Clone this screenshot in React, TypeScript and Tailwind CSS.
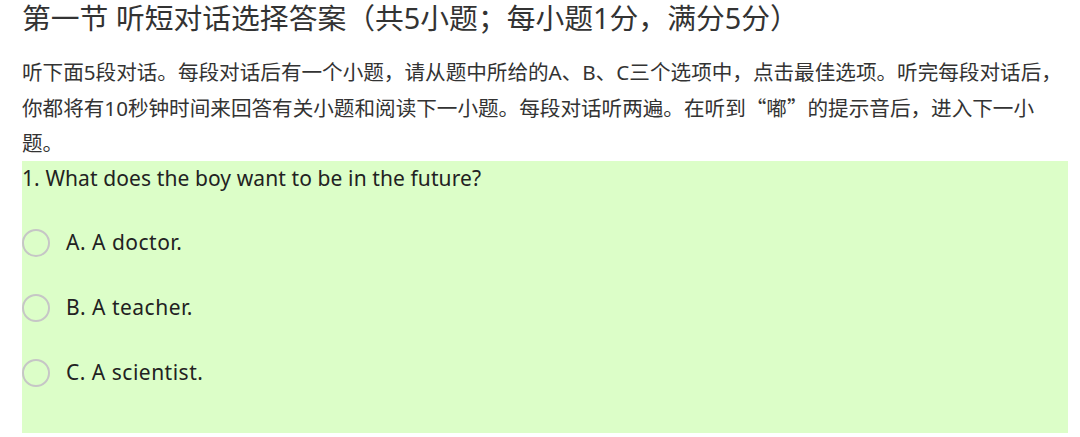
import React from "react";

const options = ["A. A doctor.", "B. A teacher.", "C. A scientist."];

const cjk = { fontFamily: '"Noto Sans CJK SC", sans-serif' };

export default function App() {
  return (
    <div
      className="min-h-[437px] bg-white pl-[22px] pr-[12px] text-[#333]"
      style={{ fontFamily: '"Noto Sans", "Noto Sans CJK SC", sans-serif' }}
    >
      <h1 className="whitespace-nowrap text-[28.8px] font-normal leading-[36px] text-[#333]">
        第一节 听短对话选择答案（共5小题；每小题1分，满分5分）
      </h1>
      <p className="mt-[19px] text-[20.6px] leading-[35px] text-[#333]">
        <span className="block whitespace-nowrap">
          听下面5段对话。每段对话后有一个小题，请从题中所给的A、B、C三个选项中，点击最佳选项。听完每段对话后，
        </span>
        <span className="block whitespace-nowrap">
          你都将有10秒钟时间来回答有关小题和阅读下一小题。每段对话听两遍。在听到
          <span style={cjk}>“嘟”</span>
          的提示音后，进入下一小
        </span>
        <span className="block whitespace-nowrap">题。</span>
      </p>
      <div className="w-[1046px] bg-[#dcfec8] pb-[28px]">
        <div className="text-[21px] leading-[34px] tracking-[0.1px] text-[#222]">
          1. What does the boy want to be in the future?
        </div>
        <div className="mt-[15px] flex flex-col">
          {options.map((o) => (
            <label key={o} className="flex h-[65px] items-center gap-[16px]">
              <span className="h-[28px] w-[28px] shrink-0 rounded-full border-2 border-[#c6c6c6]" />
              <span className="text-[21px] tracking-[0.5px] text-[#222]">{o}</span>
            </label>
          ))}
        </div>
      </div>
    </div>
  );
}
